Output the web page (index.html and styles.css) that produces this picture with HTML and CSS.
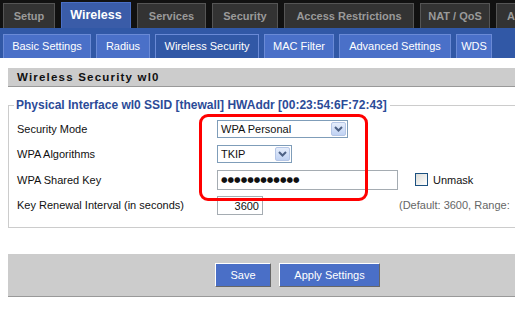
FILE: index.html
```html
<!DOCTYPE html>
<html>
<head>
<meta charset="utf-8">
<link rel="stylesheet" href="styles.css">
</head>
<body>
<div class="topbar">
  <div class="tab t-setup">Setup</div>
  <div class="tab t-wireless active">Wireless</div>
  <div class="tab t-services">Services</div>
  <div class="tab t-security">Security</div>
  <div class="tab t-access">Access Restrictions</div>
  <div class="tab t-nat">NAT / QoS</div>
  <div class="tab t-admin">Administration</div>
</div>
<div class="subbar">
  <div class="sub s-basic">Basic Settings</div>
  <div class="sub s-radius">Radius</div>
  <div class="sub s-wsec current">Wireless Security</div>
  <div class="sub s-mac">MAC Filter</div>
  <div class="sub s-adv">Advanced Settings</div>
  <div class="sub s-wds">WDS</div>
</div>
<div class="main">
  <h2 class="section">Wireless Security wl0</h2>
  <fieldset class="box">
    <legend>Physical Interface wl0 SSID [thewall] HWAddr [00:23:54:6F:72:43]</legend>
    <div class="highlight"></div>
    <div class="row">
      <div class="label">Security Mode</div>
      <div class="select sel-mode"><span class="val">WPA Personal</span><span class="arrow"><svg width="11" height="8" viewBox="0 0 11 8"><path d="M2 2 L5.5 5.5 L9 2" fill="none" stroke="#4d6185" stroke-width="2"/></svg></span></div>
    </div>
    <div class="row">
      <div class="label">WPA Algorithms</div>
      <div class="select sel-algo"><span class="val">TKIP</span><span class="arrow"><svg width="11" height="8" viewBox="0 0 11 8"><path d="M2 2 L5.5 5.5 L9 2" fill="none" stroke="#4d6185" stroke-width="2"/></svg></span></div>
    </div>
    <div class="row">
      <div class="label">WPA Shared Key</div>
      <div class="input key">●●●●●●●●●●●●</div>
      <span class="check"></span><span class="unmask">Unmask</span>
    </div>
    <div class="row">
      <div class="label">Key Renewal Interval (in seconds)</div>
      <div class="input renew">3600</div>
      <span class="default">(Default: 3600, Range:</span>
    </div>
  </fieldset>
  <div class="actions">
    <button class="btn save">Save</button>
    <button class="btn apply">Apply Settings</button>
  </div>
</div>
</body>
</html>
```

FILE: styles.css
```css
html, body { margin: 0; padding: 0; background: #fff; overflow: hidden; }
body { width: 515px; height: 309px; font-family: "Liberation Sans", Arial, sans-serif; }

.topbar {
  background: #111;
  height: 28px;
  display: flex;
  align-items: flex-end;
  padding-left: 3px;
  gap: 6px;
  white-space: nowrap;
  overflow: hidden;
}
.tab {
  box-sizing: border-box;
  height: 25px;
  background: #333;
  border: 1px solid #555;
  border-bottom: none;
  color: #9a9a9a;
  font-family: "Liberation Sans", Arial, sans-serif;
  font-weight: bold;
  font-size: 11px;
  line-height: 24px;
  text-align: center;
  flex: none;
}
.tab.active { background: #3a5ca8; border-color: #4a6fc5; color: #fff; font-size: 12.5px; height: 26px; }
.t-setup { width: 52px; }
.t-wireless { width: 70px; }
.t-services { width: 69px; }
.t-security { width: 66px; }
.t-access { width: 130px; }
.t-nat { width: 70px; }
.t-admin { width: 100px; text-align: left; padding-left: 10px; }

.subbar {
  background: #3158a6;
  height: 30px;
  display: flex;
  align-items: flex-end;
  padding-left: 3px;
  gap: 5px;
  white-space: nowrap;
}
.sub {
  box-sizing: border-box;
  height: 24px;
  background: #4a70c8;
  border: 1px solid #6a8ad6;
  border-bottom: none;
  color: #fff;
  font-family: "Liberation Sans", Arial, sans-serif;
  font-size: 11px;
  line-height: 23px;
  text-align: center;
  flex: none;
}
.sub.current { background: #3158a6; }
.s-basic { width: 88px; }
.s-radius { width: 54px; }
.s-wsec { width: 104px; }
.s-mac { width: 70px; }
.s-adv { width: 112px; }
.s-wds { width: 36px; }

.main { padding: 10px 0 0 8px; }
.section {
  margin: 0;
  height: 18px;
  background: #ccc;
  border-bottom: 1px solid #999;
  font-family: "Liberation Sans", Arial, sans-serif;
  font-size: 11.5px;
  font-weight: bold;
  letter-spacing: 1.2px;
  line-height: 18px;
  padding-left: 9px;
  color: #111;
}
.box {
  position: relative;
  margin: 11px 0 0 0;
  border: 1px solid #ccc;
  border-right: none;
  padding: 4px 0 5px 8px;
  box-sizing: border-box;
  height: 130px;
}
.box legend {
  font-family: "Liberation Sans", Arial, sans-serif;
  font-size: 12px;
  font-weight: bold;
  color: #2b4b98;
  padding: 0 3px 0 2px;
  margin-left: -3px;
}
.highlight {
  position: absolute;
  left: 190px;
  top: 2px;
  width: 169px;
  height: 87px;
  border: 3px solid #ff0000;
  border-radius: 9px;
  box-sizing: border-box;
}
.row {
  display: flex;
  align-items: center;
  height: 25.5px;
  font-size: 11px;
  color: #111;
  white-space: nowrap;
}
.label { width: 200px; flex: none; }
.select {
  box-sizing: border-box;
  height: 18px;
  border: 1px solid #7f9db9;
  display: flex;
  align-items: center;
  background: #fff;
}
.select .val { flex: 1; padding-left: 3px; }
.select .arrow {
  width: 15px; height: 14px; margin-right: 1px;
  box-sizing: border-box;
  border: 1px solid #b5c6e6;
  background: linear-gradient(#e5edfb, #c0d2f3);
  border-radius: 2px;
  display: flex; align-items: center; justify-content: center;
}
.sel-mode { width: 131px; }
.sel-algo { width: 75px; }
.input {
  box-sizing: border-box;
  border: 1px solid #a5acb2;
  background: #fff;
  height: 20px;
  line-height: 18px;
}
.key { width: 181px; padding-left: 3px; font-family: "DejaVu Sans", sans-serif; font-size: 7.5px; }
.check {
  display: inline-block;
  width: 13px; height: 13px;
  box-sizing: border-box;
  border: 1px solid #1c5180;
  background: linear-gradient(135deg, #dcdcd7, #fff);
  margin-left: 17px;
}
.unmask { margin-left: 5px; }
.renew { width: 46px; height: 19px; text-align: right; padding-right: 3px; }
.default { color: #666; margin-left: 136px; }

.actions {
  margin-top: 26px;
  height: 42px;
  background: #ccc;
  border-bottom: 1px solid #999;
  display: flex;
  align-items: center;
  padding-left: 207px;
  gap: 8px;
}
.btn {
  box-sizing: border-box;
  height: 24px;
  background: #4a6fc7;
  color: #fff;
  font-family: "Liberation Sans", Arial, sans-serif;
  font-size: 11px;
  border: 1px solid;
  border-color: #fff #666 #666 #fff;
  padding: 0;
}
.save { width: 56px; }
.apply { width: 101px; }
```
